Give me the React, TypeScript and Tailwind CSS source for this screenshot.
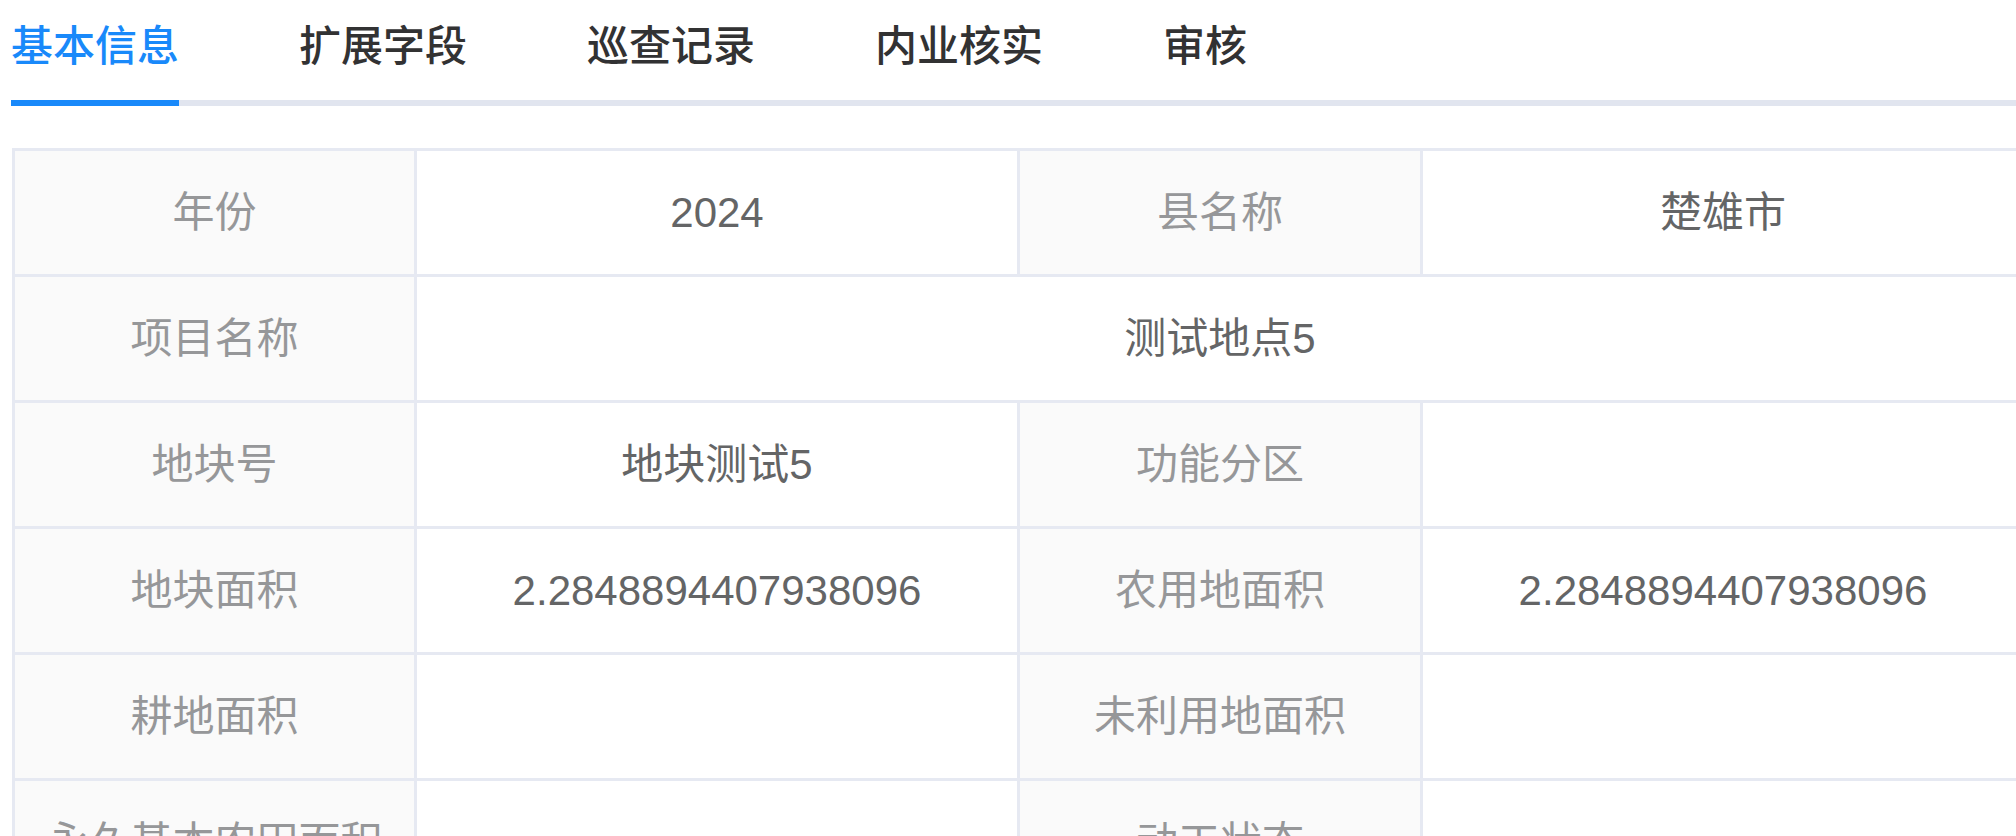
const tabs = ['基本信息', '扩展字段', '巡查记录', '内业核实', '审核']

type Cell = { text: string; label?: boolean; span?: boolean }

const rows: Cell[][] = [
  [
    { text: '年份', label: true },
    { text: '2024' },
    { text: '县名称', label: true },
    { text: '楚雄市' },
  ],
  [{ text: '项目名称', label: true }, { text: '测试地点5', span: true }],
  [
    { text: '地块号', label: true },
    { text: '地块测试5' },
    { text: '功能分区', label: true },
    { text: '' },
  ],
  [
    { text: '地块面积', label: true },
    { text: '2.2848894407938096' },
    { text: '农用地面积', label: true },
    { text: '2.2848894407938096' },
  ],
  [
    { text: '耕地面积', label: true },
    { text: '' },
    { text: '未利用地面积', label: true },
    { text: '' },
  ],
  [
    { text: '永久基本农田面积', label: true },
    { text: '' },
    { text: '动工状态', label: true },
    { text: '' },
  ],
]

export default function App() {
  return (
    <div className="h-[836px] w-full overflow-hidden bg-white font-['Liberation_Sans','Noto_Sans_CJK_SC',sans-serif]">
      <nav className="ml-[11px] flex gap-[120px] border-b-[6px] border-[#e1e5ef]">
        {tabs.map((tab, index) => (
          <div
            key={tab}
            className={
              index === 0
                ? '-mb-[6px] border-b-[6px] border-[#1989fa] pt-[26px] pb-[32px] text-[42px] leading-[42px] font-medium text-[#1989fa]'
                : '-mb-[6px] border-b-[6px] border-transparent pt-[26px] pb-[32px] text-[42px] leading-[42px] font-medium text-[#323233]'
            }
          >
            {tab}
          </div>
        ))}
      </nav>

      <div className="mt-[42px] ml-[12px] grid w-[2014px] grid-cols-[402px_603px_403px_603px] border-t-[3px] border-l-[3px] border-[#e6e9f2]">
        {rows.map((row, rowIndex) =>
          row.map((cell, cellIndex) => (
            <div
              key={`${rowIndex}-${cellIndex}`}
              className={
                (cell.span ? 'col-span-3 ' : '') +
                (cell.label ? 'bg-[#fafafa] text-[#969799] ' : 'bg-white text-[#646566] ') +
                'flex h-[126px] items-center justify-center border-r-[3px] border-b-[3px] border-[#e6e9f2] text-[42px] leading-[42px] whitespace-nowrap'
              }
            >
              {cell.text}
            </div>
          )),
        )}
      </div>
    </div>
  )
}
